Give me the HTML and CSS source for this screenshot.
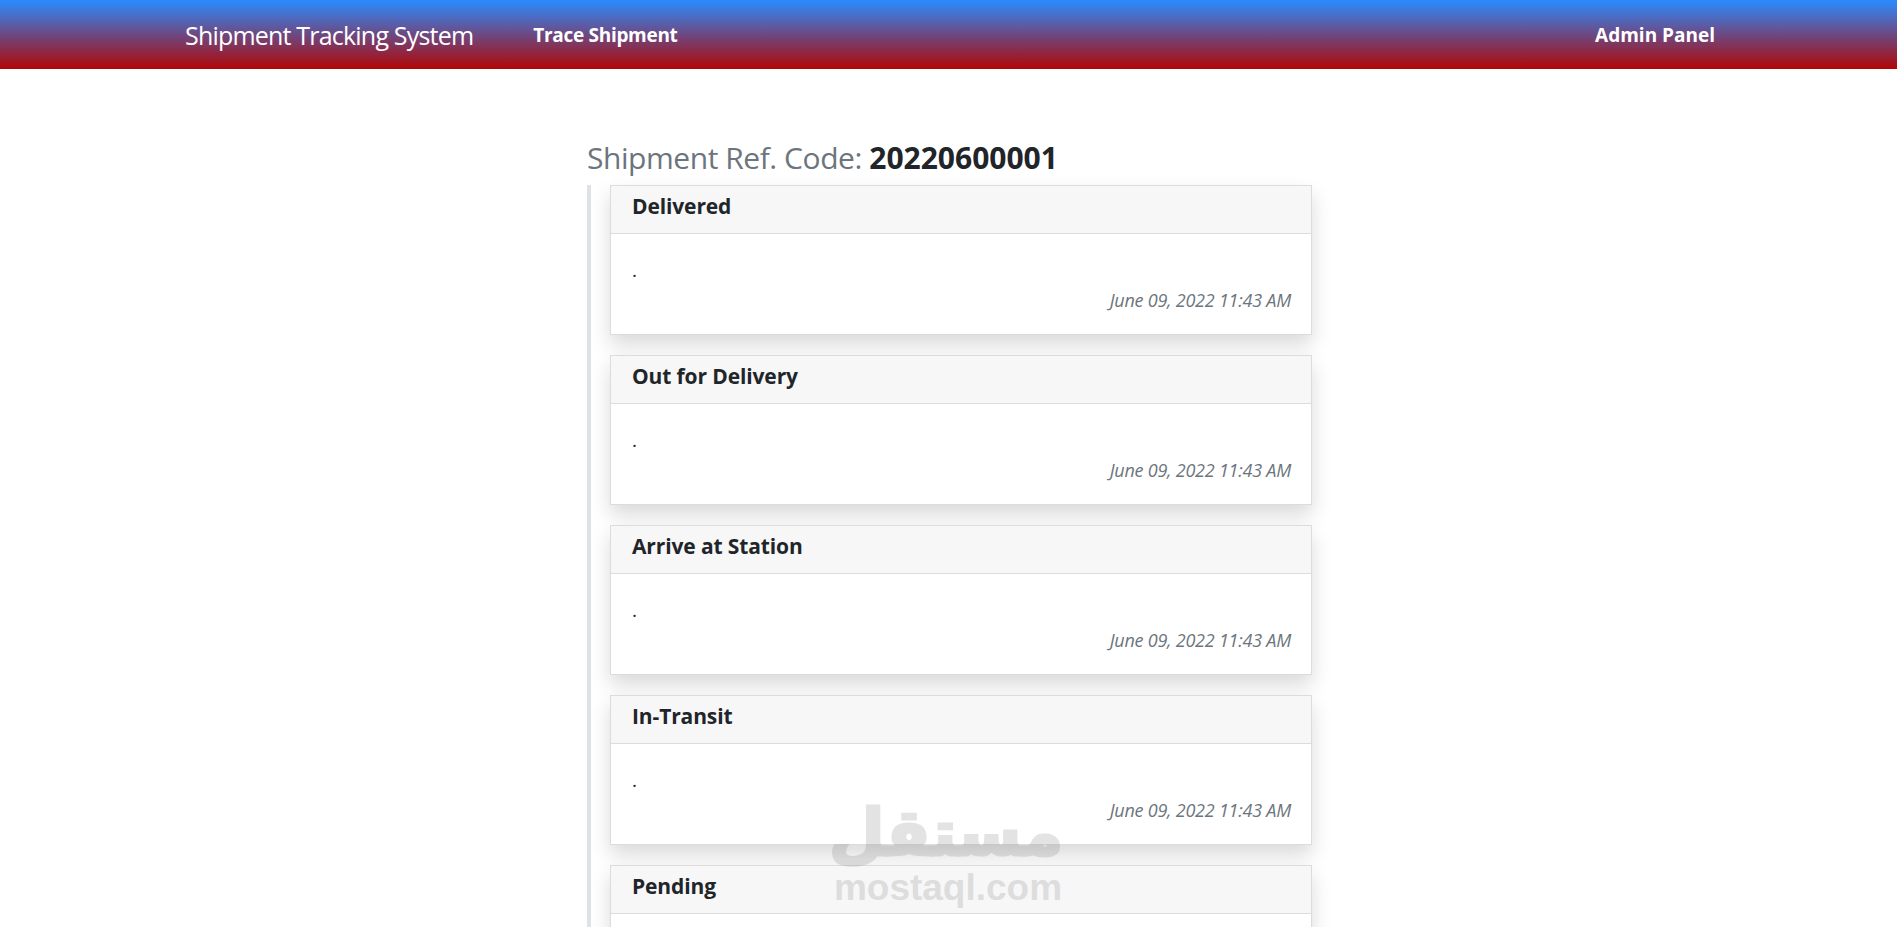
FILE: index.html
```html
<!DOCTYPE html>
<html lang="en">

<head>
    <meta charset="UTF-8">
    <meta name="viewport" content="width=device-width, initial-scale=1.0">
    <title>Shipment Tracking System</title>
    <link rel="stylesheet" href="styles.css">
</head>

<body>
    <nav class="navbar">
        <a class="brand" href="#">Shipment Tracking System</a>
        <a class="nav-link" href="#">Trace Shipment</a>
        <a class="nav-link nav-right" href="#">Admin Panel</a>
    </nav>

    <main class="content">
        <h3 class="ref-title">Shipment Ref. Code: <b>20220600001</b></h3>
        <div class="timeline">
            <div class="card">
                <div class="card-header">Delivered</div>
                <div class="card-body">
                    <p class="remarks">.</p>
                    <div class="stamp">June 09, 2022 11:43 AM</div>
                </div>
            </div>
            <div class="card">
                <div class="card-header">Out for Delivery</div>
                <div class="card-body">
                    <p class="remarks">.</p>
                    <div class="stamp">June 09, 2022 11:43 AM</div>
                </div>
            </div>
            <div class="card">
                <div class="card-header">Arrive at Station</div>
                <div class="card-body">
                    <p class="remarks">.</p>
                    <div class="stamp">June 09, 2022 11:43 AM</div>
                </div>
            </div>
            <div class="card">
                <div class="card-header">In-Transit</div>
                <div class="card-body">
                    <p class="remarks">.</p>
                    <div class="stamp">June 09, 2022 11:43 AM</div>
                </div>
            </div>
            <div class="card">
                <div class="card-header">Pending</div>
                <div class="card-body"></div>
            </div>
        </div>
    </main>

    <div class="watermark">
        <div class="wm-arabic" lang="ar" dir="rtl">مستقل</div>
        <div class="wm-latin">mostaql.com</div>
    </div>
</body>

</html>
```

FILE: styles.css
```css
html,
body {
    height: 100%;
    overflow: hidden;
}

body {
    margin: 0;
    background: #fff;
    color: #212529;
    font-family: "Open Sans", "Noto Sans", sans-serif;
}

.navbar {
    display: flex;
    align-items: center;
    height: 69px;
    padding: 0 182px 0 185px;
    background: linear-gradient(180deg, #2a8cff, #b00606);
}

.navbar a {
    color: #fff;
    text-decoration: none;
}

.brand {
    font-size: 25px;
    letter-spacing: -0.8px;
    margin-right: 60px;
}

.nav-link {
    font-size: 19px;
    font-weight: 700;
}

.nav-link:not(.nav-right) {
    letter-spacing: -0.3px;
}

.nav-right {
    margin-left: auto;
}

.content {
    width: 725px;
    margin: 69px auto 0;
    transform: translateX(1px);
}

.ref-title {
    margin: 0;
    height: 47px;
    line-height: 40px;
    font-size: 30px;
    font-weight: 400;
    letter-spacing: -0.45px;
    color: #6c757d;
}

.ref-title b {
    color: #212529;
    font-weight: 700;
    letter-spacing: 0;
}

.timeline {
    border-left: 4px solid #dee2e6;
    padding-left: 19px;
}

.card {
    height: 150px;
    margin-bottom: 20px;
    box-sizing: border-box;
    border: 1px solid #dcdcdc;
    background: #fff;
    box-shadow: 0 10px 19px rgba(0, 0, 0, 0.15);
}

.card-header {
    height: 48px;
    box-sizing: border-box;
    padding: 3px 21px 0;
    background: #f7f7f7;
    border-bottom: 1px solid #dcdcdc;
    font-size: 21px;
    font-weight: 700;
    letter-spacing: -0.12px;
    line-height: 34px;
}

.card-body {
    padding: 19px 20px 0 21px;
}

.remarks {
    margin: 0;
    height: 33px;
    font-size: 19px;
    line-height: 34px;
}

.stamp {
    text-align: right;
    font-size: 18px;
    font-style: italic;
    letter-spacing: -0.24px;
    line-height: 28px;
    color: #6c757d;
}

.watermark {
    position: absolute;
    left: 833px;
    top: 800px;
    width: 230px;
    text-align: center;
    color: #777;
    opacity: 0.2;
}

.wm-arabic {
    font-family: "DejaVu Sans", sans-serif;
    font-size: 64px;
    font-weight: 700;
    line-height: 66px;
    -webkit-text-stroke: 3px #777;
}

.wm-latin {
    font-family: "Liberation Sans", sans-serif;
    font-size: 37px;
    font-weight: 700;
    line-height: 44px;
}
```
